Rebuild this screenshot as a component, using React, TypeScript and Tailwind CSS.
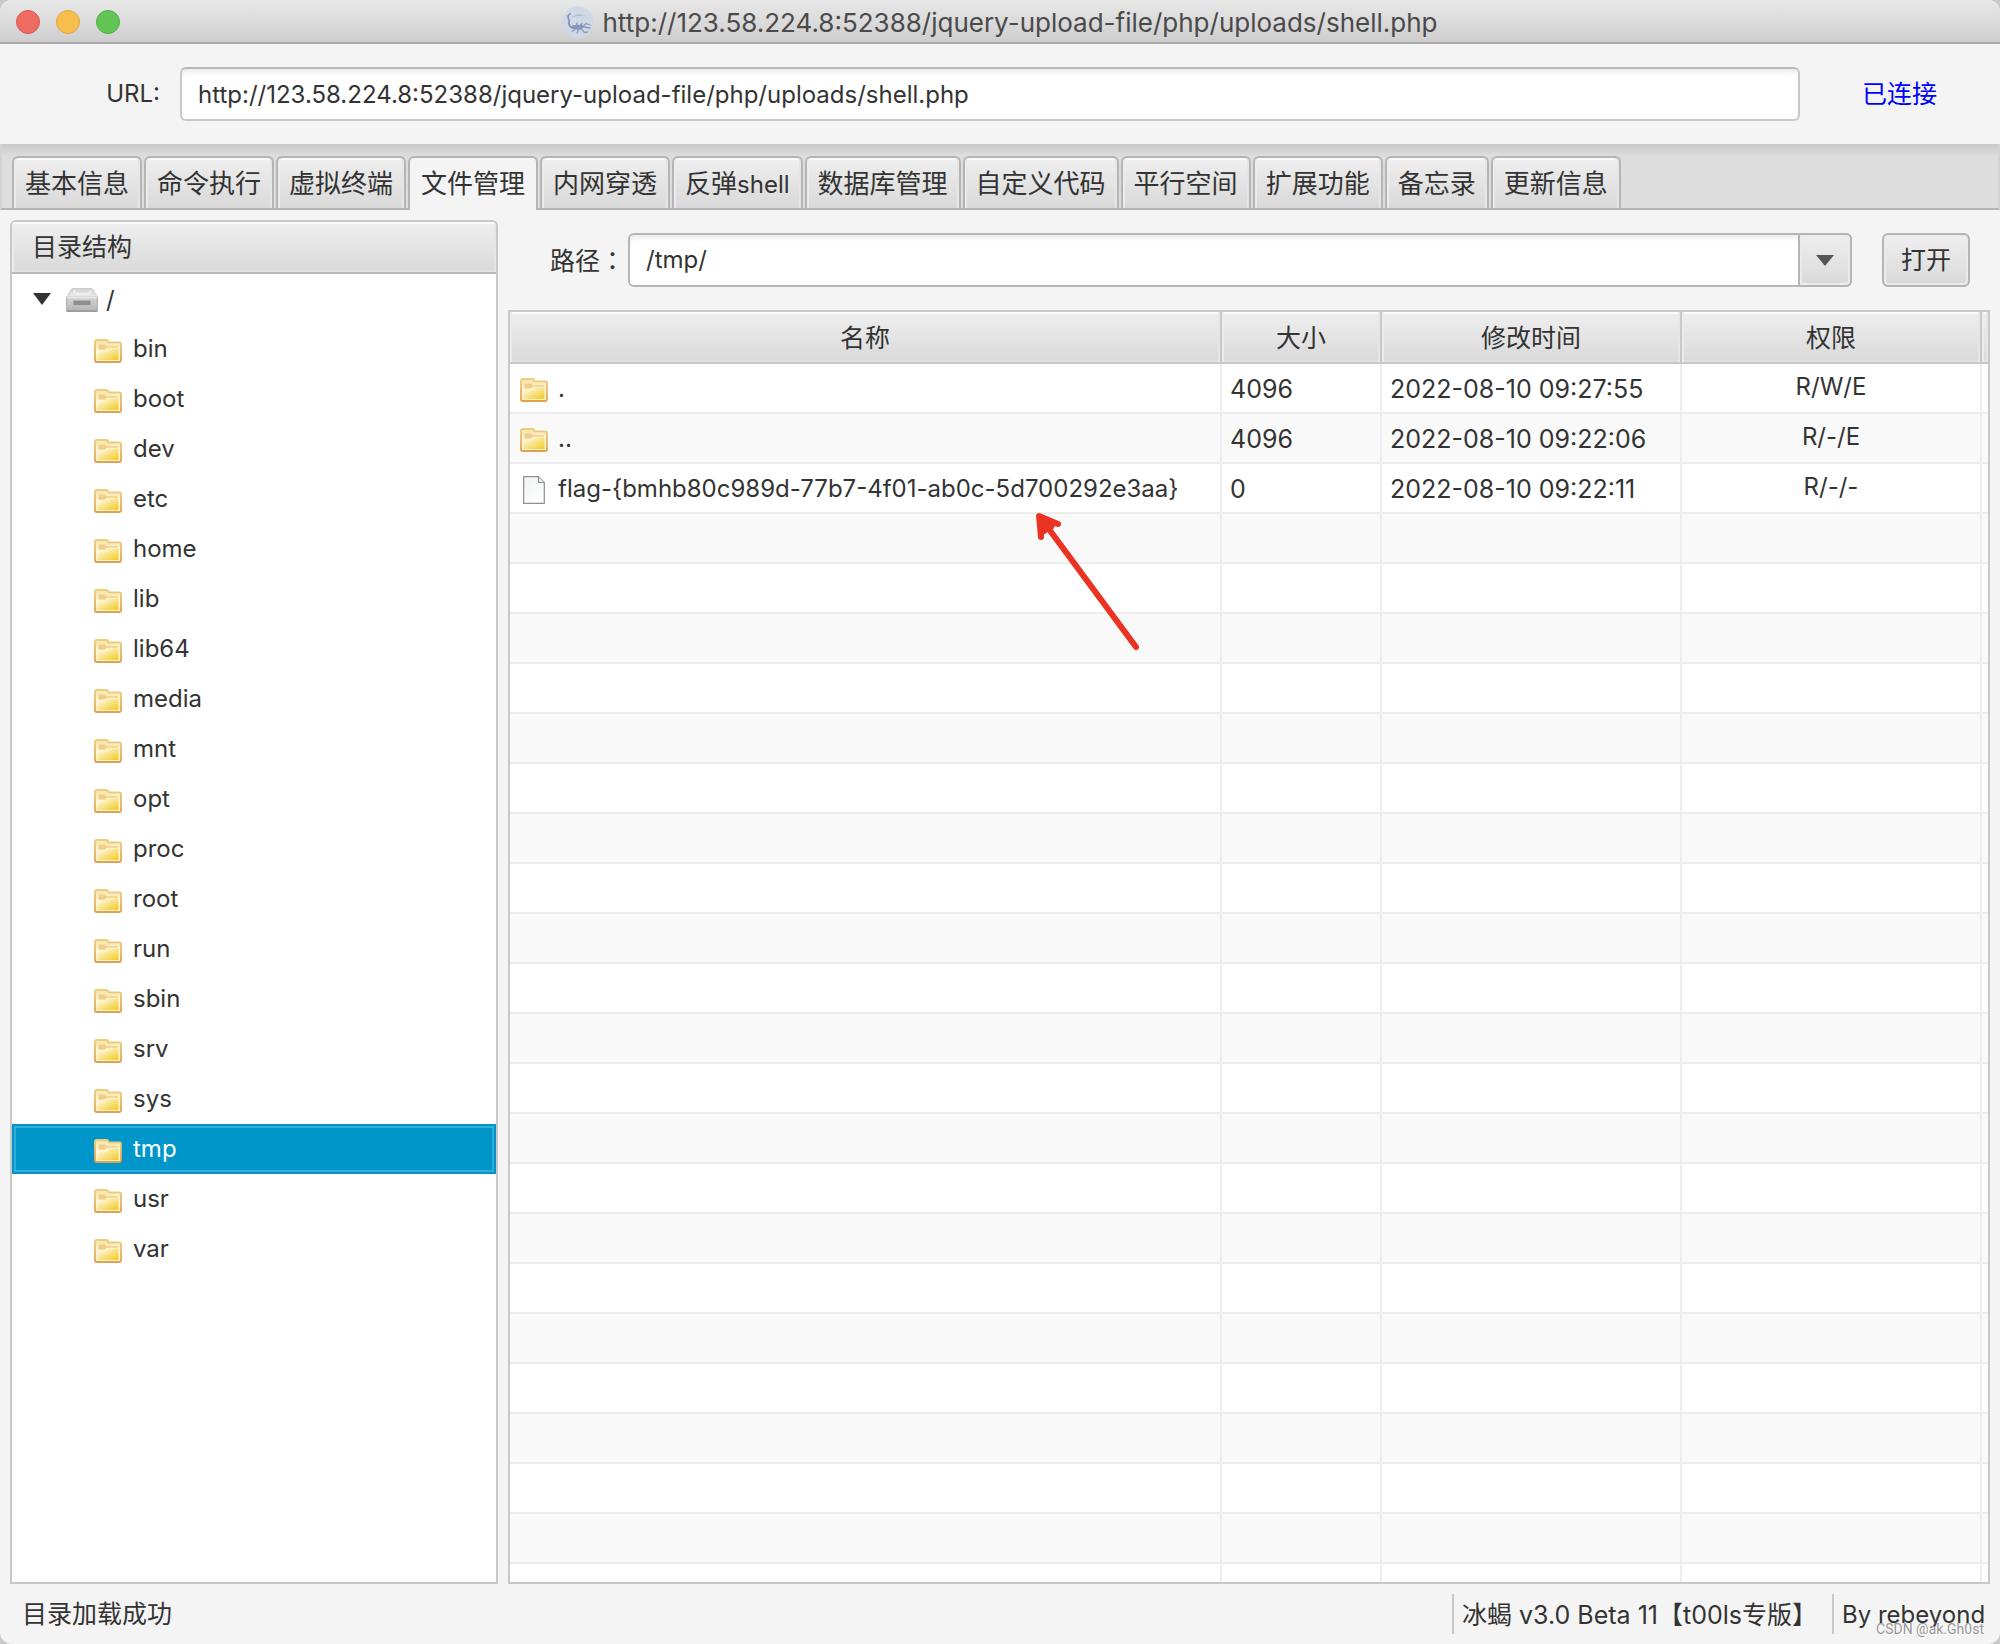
import React from "react";

const TABS = ["基本信息", "命令执行", "虚拟终端", "文件管理", "内网穿透", "反弹shell", "数据库管理", "自定义代码", "平行空间", "扩展功能", "备忘录", "更新信息"];
const ACTIVE_TAB = "文件管理";

const FOLDERS = ["bin", "boot", "dev", "etc", "home", "lib", "lib64", "media", "mnt", "opt", "proc", "root", "run", "sbin", "srv", "sys", "tmp", "usr", "var"];
const SELECTED = "tmp";

type Entry = { kind: "folder" | "file"; name: string; size: string; time: string; perm: string };
const ENTRIES: Entry[] = [
  { kind: "folder", name: ".", size: "4096", time: "2022-08-10 09:27:55", perm: "R/W/E" },
  { kind: "folder", name: "..", size: "4096", time: "2022-08-10 09:22:06", perm: "R/-/E" },
  { kind: "file", name: "flag-{bmhb80c989d-77b7-4f01-ab0c-5d700292e3aa}", size: "0", time: "2022-08-10 09:22:11", perm: "R/-/-" },
];
const EMPTY_ROWS = Array.from({ length: 22 }, (_, i) => i);

const URL_TEXT = "http://123.58.224.8:52388/jquery-upload-file/php/uploads/shell.php";

function FolderIcon() {
  return (
    <svg width="30" height="26" viewBox="0 0 30 26" className="shrink-0" aria-hidden="true">
      <path d="M2 3.500q0-1.500 1.500-1.500h10q1 0 1.500 1l.5 1.300h11q1.500 0 1.500 1.500v16.700q0 1.500-1.500 1.500H3.500Q2 24 2 22.500z" fill="url(#folderBack)" stroke="url(#folderEdge)" strokeWidth="1.800" strokeLinejoin="round" />
      <path d="M5.500 6.500h6.500l1.800 1.800h11v1.500H13.500L12 11.800H5.500z" fill="#eec67a" opacity="0.800" />
      <path d="M4.500 13.500h8.500l3-2.700H25.500v11.200h-21z" fill="url(#folderFront)" />
    </svg>
  );
}

function FileIcon() {
  return (
    <svg width="22" height="28" viewBox="0 0 22 28" className="shrink-0" aria-hidden="true">
      <path d="M.7.700h14.800l5.800 5.800V27.300H.700z" fill="url(#filePaper)" stroke="#8f8f8f" strokeWidth="1.200" />
      <path d="M15.500.700v5.800h5.800" fill="#ececec" stroke="#8f8f8f" strokeWidth="1.200" />
    </svg>
  );
}

function DriveIcon() {
  return (
    <svg width="32" height="26" viewBox="0 0 32 26" className="shrink-0" aria-hidden="true">
      <path d="M7 1.500h18q1.500 0 2.200 1.500l4 7H.8l4-7Q5.500 1.500 7 1.500z" fill="url(#driveTop)" stroke="#c4c4c4" strokeWidth="0.800" />
      <path d="M.6 9.500h30.800v14.500H.6z" fill="url(#driveFront)" />
      <path d="M9 3q-3 3.500 3 3.800h8q5 0 4-3" stroke="#f7f7f7" strokeWidth="1.300" fill="none" />
      <path d="M1 10.500h30" stroke="#e9e9e9" strokeWidth="1.200" />
      <rect x="7.500" y="13.500" width="17" height="4.600" fill="#8f8f8f" />
      <path d="M.6 10v14M31.400 10v14" stroke="#adadad" strokeWidth="1" />
      <path d="M.6 24.200h30.800" stroke="#8a8a8a" strokeWidth="1.300" />
    </svg>
  );
}

function Scorpion() {
  return (
    <svg width="32" height="32" viewBox="0 0 32 32" className="shrink-0" aria-hidden="true">
      <circle cx="16" cy="16" r="15.700" fill="#cfd8e4" />
      <path d="M10 11q7-3 14-1M13 9.500l6-1" stroke="#b4bcc9" strokeWidth="0.900" fill="none" />
      <path d="M8.200 8Q5.500 8.500 6.300 12.500Q8 15 6.800 17.500Q8 21.500 11 22" stroke="#8292b9" strokeWidth="1.700" strokeLinecap="round" fill="none" />
      <path d="M9 20q8-2.500 14 0l-4 3.500q-6 1-10-1.500z" fill="#8796bc" />
      <path d="M21 20.500l3-3 4 1.500M22 21l6 1M13 23.500l-3 2M16.500 23.500l-1.500 3.500M19.500 23l3 3.500 3-.5M14 20l1-3M18 20l2-2.500" stroke="#8999bf" strokeWidth="1.300" strokeLinecap="round" strokeLinejoin="round" fill="none" />
    </svg>
  );
}

function Gradients() {
  return (
    <svg width="0" height="0" className="absolute" aria-hidden="true">
      <defs>
        <linearGradient id="folderBack" x1="0" y1="0" x2="0" y2="1">
          <stop offset="0" stopColor="#f6e3a4" />
          <stop offset="0.500" stopColor="#fff6d8" />
          <stop offset="1" stopColor="#fdf0c8" />
        </linearGradient>
        <linearGradient id="folderEdge" x1="0" y1="0" x2="0" y2="1">
          <stop offset="0" stopColor="#e9cf80" />
          <stop offset="1" stopColor="#e2a050" />
        </linearGradient>
        <linearGradient id="folderFront" x1="0" y1="0" x2="1" y2="1">
          <stop offset="0.150" stopColor="#fdf4d0" />
          <stop offset="1" stopColor="#f0ca20" />
        </linearGradient>
        <linearGradient id="filePaper" x1="0" y1="0" x2="1" y2="1">
          <stop offset="0" stopColor="#f1f3f4" />
          <stop offset="1" stopColor="#ffffff" />
        </linearGradient>
        <linearGradient id="driveTop" x1="0" y1="0" x2="0" y2="1">
          <stop offset="0" stopColor="#d2d2d2" />
          <stop offset="1" stopColor="#ebebeb" />
        </linearGradient>
        <linearGradient id="driveFront" x1="0" y1="0" x2="0" y2="1">
          <stop offset="0" stopColor="#d8d8d8" />
          <stop offset="1" stopColor="#b4b4b4" />
        </linearGradient>
      </defs>
    </svg>
  );
}

function TitleBar() {
  return (
    <header className="relative flex h-11 shrink-0 items-center justify-center gap-2 border-b-2 border-[#a9a9a9] bg-linear-to-b from-[#e8e8e8] to-[#cecece] pt-[2px]">
      <div className="absolute left-4 flex gap-4">
        <button aria-label="Close" className="size-6 rounded-full border border-[#d9574c] bg-[#ed6b60]" />
        <button aria-label="Minimize" className="size-6 rounded-full border border-[#dda53d] bg-[#f5be4f]" />
        <button aria-label="Zoom" className="size-6 rounded-full border border-[#4fae40] bg-[#61c655]" />
      </div>
      <Scorpion />
      <h1 className="pt-[2px] text-[26px] leading-8 text-[#4a4a4a]">{URL_TEXT}</h1>
    </header>
  );
}

const HEADER_FACE = "bg-linear-to-b from-[#efefef] to-[#d9d9d9] shadow-[inset_2px_0_0_#ececec,inset_-2px_0_0_#e6e6e6,inset_0_2px_0_#fbfbfb,inset_0_-2px_0_#e0e0e0]";

function Tree() {
  return (
    <section className="flex w-[488px] shrink-0 flex-col overflow-hidden rounded-t-md border-2 border-[#c8c8c8] bg-white">
      <h2 className={`h-[52px] shrink-0 border-b-2 border-[#b8b8b8] pl-5 text-[25px] leading-[50px] ${HEADER_FACE}`}>目录结构</h2>
      <ul>
        <li className="flex h-[50px] items-center pl-[21px]">
          <svg width="18" height="12" viewBox="0 0 18 12" aria-hidden="true">
            <path d="M0 0h18L9 12z" fill="#333" />
          </svg>
          <span className="ml-[15px] flex items-center gap-2 pt-[2px]">
            <DriveIcon />
            <span>/</span>
          </span>
        </li>
        {FOLDERS.map((name) => (
          <li
            key={name}
            className={
              name === SELECTED
                ? "flex h-[50px] items-center gap-[10px] bg-[#0096c9] pl-[81px] text-white outline-2 -outline-offset-4 outline-[#35abd6]"
                : "flex h-[50px] items-center gap-[10px] pl-[81px]"
            }
          >
            <span className="pt-1">
              <FolderIcon />
            </span>
            <span>{name}</span>
          </li>
        ))}
      </ul>
    </section>
  );
}

const CELL = "h-[50px] border-r-2 border-b-2 border-[#ededed] p-0";
const HEAD_CELL = `h-[52px] border-r-2 border-b-2 border-[#c8c8c8] p-0 pt-[2px] text-[25px] font-normal ${HEADER_FACE}`;

function FileTable() {
  return (
    <div className="min-h-0 flex-1 overflow-hidden border-2 border-[#c8c8c8] bg-white">
      <table className="w-full table-fixed border-separate border-spacing-0">
        <colgroup>
          <col />
          <col className="w-40" />
          <col className="w-[300px]" />
          <col className="w-[300px]" />
          <col className="w-[6px]" />
        </colgroup>
        <thead>
          <tr>
            <th className={HEAD_CELL}>名称</th>
            <th className={HEAD_CELL}>大小</th>
            <th className={HEAD_CELL}>修改时间</th>
            <th className={HEAD_CELL}>权限</th>
            <td className={`border-b-2 border-[#c8c8c8] p-0 ${HEADER_FACE}`} />
          </tr>
        </thead>
        <tbody>
          {ENTRIES.map((e) => (
            <tr key={e.name} className="even:bg-[#f9f9f9]">
              <td className={CELL}>
                <div className="flex items-center gap-[9px] pt-[2px] pl-[9px]">
                  <span className="flex w-[30px] justify-center pt-[2px]">{e.kind === "folder" ? <FolderIcon /> : <FileIcon />}</span>
                  <span className="whitespace-nowrap">{e.name}</span>
                </div>
              </td>
              <td className={`${CELL} pt-[2px] pl-2 text-[25px]`}>{e.size}</td>
              <td className={`${CELL} pt-[2px] pl-2 text-[25px] whitespace-nowrap`}>{e.time}</td>
              <td className={`${CELL} text-center`}>
                <div className="pb-[2px]">{e.perm}</div>
              </td>
              <td className="border-b-2 border-[#ededed] p-0" />
            </tr>
          ))}
          {EMPTY_ROWS.map((i) => (
            <tr key={i} className="even:bg-[#f9f9f9]">
              <td className={CELL} />
              <td className={CELL} />
              <td className={CELL} />
              <td className={CELL} />
              <td className="border-b-2 border-[#ededed] p-0" />
            </tr>
          ))}
        </tbody>
      </table>
    </div>
  );
}

function TabLabel({ text }: { text: string }) {
  const cjk = text.replace(/[a-z]+$/, "");
  const latin = text.slice(cjk.length);
  return (
    <>
      {cjk}
      {latin && <span className="text-2xl leading-8">{latin}</span>}
    </>
  );
}

export default function App() {
  return (
    <div className="h-screen bg-[#c9c9c9]">
      <div className='relative flex h-full flex-col overflow-hidden rounded-xl bg-[#f4f4f4] font-["Inter","Noto_Sans_CJK_SC",sans-serif] text-2xl leading-8 text-[#333]'>
        <Gradients />
        <TitleBar />

        <div className="flex h-[100px] shrink-0 items-center">
          <label htmlFor="url" className="w-[180px] pr-5 text-right">
            URL:
          </label>
          <input
            id="url"
            type="text"
            defaultValue={URL_TEXT}
            className="h-[54px] min-w-0 flex-1 rounded-md border-2 border-[#c8c8c8] border-t-[#b8b8b8] bg-white px-4 shadow-[inset_0_6px_6px_-4px_#e4e4e4] outline-none"
          />
          <span className="w-[200px] pl-[62px] text-[25px] text-[#0000ff]">已连接</span>
        </div>

        <nav role="tablist" className="flex h-[66px] shrink-0 items-end gap-[2px] border-x-2 border-b-2 border-x-[#d2d2d2] border-b-[#b5b5b5] bg-linear-to-b from-[#c8c8c8] to-[#dddddd] to-[12px] pl-[10px]">
          {TABS.map((t) => (
            <button
              key={t}
              role="tab"
              aria-selected={t === ACTIVE_TAB}
              className={
                t === ACTIVE_TAB
                  ? "-mb-[2px] h-[54px] rounded-t-md border-2 border-b-0 border-[#b5b5b5] bg-[#f4f4f4] px-[11px] text-[26px]"
                  : "h-[52px] rounded-t-md border-2 border-b-0 border-[#b5b5b5] bg-linear-to-b from-[#efefef] to-[#d9d9d9] px-[11px] pt-[2px] text-[26px] shadow-[inset_2px_0_0_#ececec,inset_-2px_0_0_#e6e6e6,inset_0_2px_0_#fbfbfb]"
              }
            >
              <TabLabel text={t} />
            </button>
          ))}
        </nav>

        <main className="flex min-h-0 flex-1 gap-[10px] px-[10px] pt-[10px]">
          <Tree />
          <section className="flex min-w-0 flex-1 flex-col">
            <div className="flex h-[90px] shrink-0 items-start pt-[13px] pr-5">
              <label htmlFor="path" className="w-[120px] pl-[42px] text-[25px] leading-[52px] whitespace-nowrap">
                路径<span className='font-["Noto_Sans_CJK_TC",sans-serif]' lang="zh-TW">：</span>
              </label>
              <div className="relative h-[54px] flex-1">
                <select id="path" className="h-full w-full appearance-none rounded-md border-2 border-[#b5b5b5] bg-white px-4 shadow-[inset_0_6px_6px_-4px_#e4e4e4] outline-none">
                  <option>/tmp/</option>
                </select>
                <span className="pointer-events-none absolute inset-y-0 right-0 flex w-[54px] items-center justify-center rounded-r-md border-2 border-[#b5b5b5] bg-linear-to-b from-[#efefef] to-[#d9d9d9] shadow-[inset_0_0_0_2px_#ebebeb]">
                  <svg width="18" height="11" viewBox="0 0 18 11" aria-hidden="true">
                    <path d="M0 0h18L9 11z" fill="#555" />
                  </svg>
                </span>
              </div>
              <button className="ml-[30px] h-[54px] w-[88px] rounded-md border-2 border-[#b5b5b5] bg-linear-to-b from-[#efefef] to-[#d9d9d9] text-[25px] shadow-[inset_0_0_0_2px_#ebebeb]">
                打开
              </button>
            </div>
            <FileTable />
          </section>
        </main>

        <footer className="flex h-[60px] shrink-0 items-center pl-[22px] text-[25px]">
          <span>目录加载成功</span>
          <span className="ml-auto flex h-10 w-[380px] items-center border-l-2 border-[#c8c8c8] pt-[2px] pl-2 whitespace-nowrap">冰蝎 v3.0 Beta 11【t00ls专版】</span>
          <span className="flex h-10 w-[168px] items-center border-l-2 border-[#c8c8c8] pt-[2px] pl-2 text-2xl leading-8 whitespace-nowrap">By rebeyond</span>
        </footer>

        <span className='absolute right-4 bottom-[5px] font-["Roboto",sans-serif] text-sm leading-5 text-[#999] [text-shadow:1px_1px_0_#fff]'>CSDN @ak.Gh0st</span>

        <svg width="120" height="150" viewBox="0 0 120 150" className="pointer-events-none absolute top-[508px] left-[1028px]" aria-hidden="true">
          <path d="M108 139L12 9M30 16L11 8L13 29M12 9l11 10-8 4z" stroke="#ea3323" strokeWidth="6" strokeLinecap="round" strokeLinejoin="round" fill="#ea3323" />
        </svg>
      </div>
    </div>
  );
}
